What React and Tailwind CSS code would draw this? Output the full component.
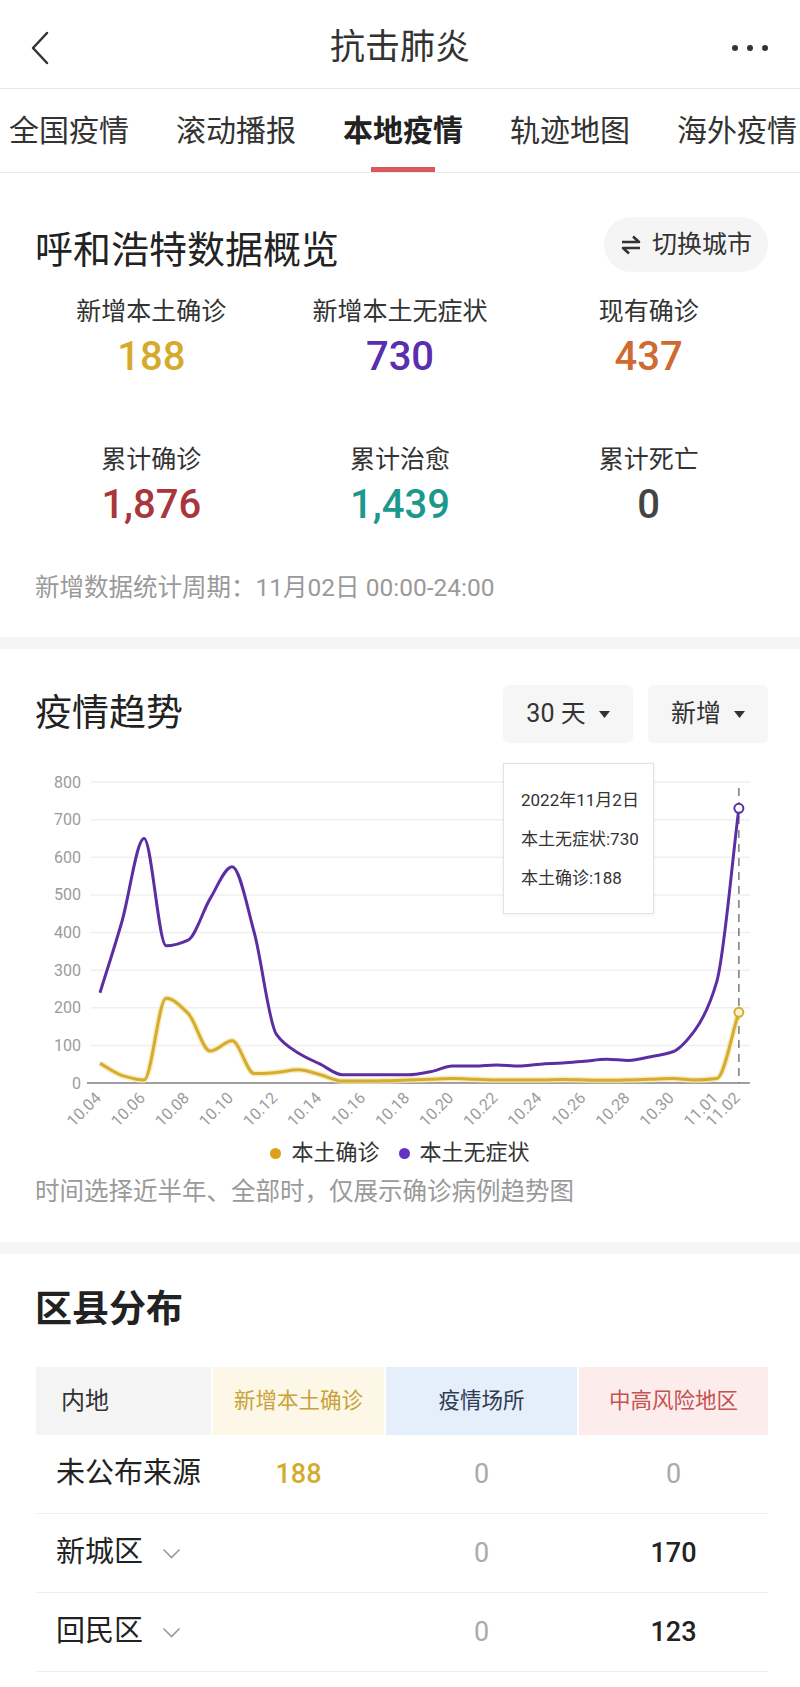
import React from 'react';

const TABS = ['全国疫情', '滚动播报', '本地疫情', '轨迹地图', '海外疫情'];

const STATS = [
    {label: '新增本土确诊', value: '188', color: 'text-[#d5ab2e]'},
    {label: '新增本土无症状', value: '730', color: 'text-[#5a2fae]'},
    {label: '现有确诊', value: '437', color: 'text-[#cf6a30]'},
    {label: '累计确诊', value: '1,876', color: 'text-[#a8363a]'},
    {label: '累计治愈', value: '1,439', color: 'text-[#1b998c]'},
    {label: '累计死亡', value: '0', color: 'text-[#444444]'},
];

// 10.04 - 11.02
const purple = [240, 430, 650, 365, 380, 490, 575, 400, 130, 80, 50, 22, 22, 22, 22, 30, 45, 45, 48, 45, 50, 53, 58, 63, 60, 70, 83, 140, 270, 730];
const yellow = [52, 20, 8, 225, 185, 85, 112, 25, 28, 35, 22, 5, 5, 6, 8, 10, 12, 10, 8, 8, 8, 9, 8, 7, 8, 10, 12, 8, 12, 188];

const X0 = 100;
const DX = 22.03;
const BASE = 328;
const K = 0.37625;
const px = (i) => X0 + i * DX;
const py = (v) => BASE - v * K;

const ticks = [
    ...Array.from({length: 14}, (_, n) => [n * 2, `10.${String(4 + n * 2).padStart(2, '0')}`]),
    [28, '11.01'],
    [29, '11.02'],
];

// monotone cubic, no overshoot below zero
function smoothPath(values) {
    const pts = values.map((v, i) => [px(i), py(v)]);
    const n = pts.length;
    const m = [];
    for (let i = 0; i < n - 1; i++) m[i] = (pts[i + 1][1] - pts[i][1]) / DX;
    const t = [m[0]];
    for (let i = 1; i < n - 1; i++) {
        t[i] = m[i - 1] * m[i] <= 0 ? 0 : (2 * m[i - 1] * m[i]) / (m[i - 1] + m[i]);
    }
    t[n - 1] = m[n - 2];
    const h = DX / 3;
    let d = `M${pts[0][0]},${pts[0][1]}`;
    for (let i = 0; i < n - 1; i++) {
        d += ` C${pts[i][0] + h},${pts[i][1] + h * t[i]} ${pts[i + 1][0] - h},${pts[i + 1][1] - h * t[i + 1]} ${pts[i + 1][0]},${pts[i + 1][1]}`;
    }
    return d;
}

const Caret = () => (
    <svg width="11" height="7" viewBox="0 0 11 7"><path d="M0 0h11L5.5 7z" fill="#333"/></svg>
);

const Chevron = () => (
    <svg width="19" height="11" viewBox="0 0 19 11" className="ml-[19px]">
        <path d="M1.5 1.5l8 8 8-8" fill="none" stroke="#9a9a9a" strokeWidth="1.6"/>
    </svg>
);

const TrendChart = () => {
    const lastX = px(29);
    return (
        <div className="relative mt-[12px] h-[380px]">
            <svg viewBox="0 0 800 380" className="block w-[800px] h-[380px]" fontFamily="Roboto, 'Noto Sans CJK SC', sans-serif">
                {[1, 2, 3, 4, 5, 6, 7, 8].map(k => (
                    <line key={k} x1={91} x2={750} y1={py(k * 100)} y2={py(k * 100)} stroke="#efefef" strokeWidth="1.5"/>
                ))}
                <line x1={87} x2={750} y1={BASE} y2={BASE} stroke="#a0a0a0" strokeWidth="2"/>
                {[0, 1, 2, 3, 4, 5, 6, 7, 8].map(k => (
                    <text key={k} x={81} y={py(k * 100)} textAnchor="end" dominantBaseline="central" fontSize="16" fill="#9b9b9b">{k * 100}</text>
                ))}
                {ticks.map(([i, label]) => (
                    <text key={label} x={px(i) + 2} y={344} textAnchor="end" fontSize="16" fill="#9b9b9b"
                          transform={`rotate(-45 ${px(i) + 2} 344)`}>{label}</text>
                ))}
                <line x1={lastX} x2={lastX} y1={33} y2={BASE} stroke="#7a7a7a" strokeWidth="1.5" strokeDasharray="8 6"/>
                <path d={smoothPath(yellow)} fill="none" stroke="#f4e6a6" strokeWidth="6" strokeOpacity="0.7"/>
                <path d={smoothPath(yellow)} fill="none" stroke="#d6ac30" strokeWidth="3"/>
                <path d={smoothPath(purple)} fill="none" stroke="#5b2fa3" strokeWidth="3"/>
                <circle cx={lastX} cy={py(730)} r="4.5" fill="#fff" stroke="#5b2fa3" strokeWidth="2"/>
                <circle cx={lastX} cy={py(188)} r="4.5" fill="#fbf1c8" stroke="#d6ac30" strokeWidth="2"/>
            </svg>
            <div className="absolute left-[503px] top-[8px] w-[151px] h-[151px] bg-white border border-[#e2e2e2] shadow-[0_1px_4px_rgba(0,0,0,0.06)] pl-[17px] pt-[17px] text-[17px] leading-[39px] text-[#333]">
                <div>2022年11月2日</div>
                <div>本土无症状:730</div>
                <div>本土确诊:188</div>
            </div>
        </div>
    );
};

const rows = [
    {name: '未公布来源', add: '188', place: '0', risk: '0', expand: false},
    {name: '新城区', add: '', place: '0', risk: '170', expand: true},
    {name: '回民区', add: '', place: '0', risk: '123', expand: true},
];

export default function App() {
    return (
        <div className="w-[800px] min-h-[1687px] bg-white text-[#333] font-['Roboto','Noto_Sans_CJK_SC',sans-serif]">
            {/* header */}
            <div className="h-[89px] pt-[8px] border-b border-[#e6e6e6] grid grid-cols-[1fr_auto_1fr] items-center px-[30px]">
                <svg width="20" height="34" viewBox="0 0 20 34">
                    <path d="M17 2L3 17l14 15" fill="none" stroke="#333" strokeWidth="2.5" strokeLinecap="round" strokeLinejoin="round"/>
                </svg>
                <div className="text-[35px] leading-[44px] text-[#333]">抗击肺炎</div>
                <div className="flex justify-end gap-[9px] pr-[2px]">
                    <span className="w-[6px] h-[6px] rounded-full bg-[#333]"/>
                    <span className="w-[6px] h-[6px] rounded-full bg-[#333]"/>
                    <span className="w-[6px] h-[6px] rounded-full bg-[#333]"/>
                </div>
            </div>

            {/* tabs */}
            <div className="h-[84px] border-b border-[#ebebeb] flex gap-[47px] pl-[9px] overflow-hidden whitespace-nowrap">
                {TABS.map((t, i) => (
                    <div key={t} className="relative h-full flex items-center shrink-0">
                        <span className={`text-[30px] leading-[40px] ${i === 2 ? 'font-bold text-[#222]' : 'text-[#333]'}`}>{t}</span>
                        {i === 2 && <span className="absolute bottom-0 left-1/2 -translate-x-1/2 w-[64px] h-[5px] bg-[#d85a5f]"/>}
                    </div>
                ))}
            </div>

            {/* overview */}
            <div className="pt-[44px] pb-[32px]">
                <div className="flex justify-between items-start pl-[35px] pr-[32px]">
                    <h2 className="text-[38px] leading-[44px] mt-[11px] text-[#222]">呼和浩特数据概览</h2>
                    <button className="h-[55px] px-[16px] rounded-[28px] bg-[#f5f5f5] flex items-center gap-[10px] text-[25px] text-[#333]">
                        <svg width="22" height="20" viewBox="0 0 22 20">
                            <path d="M2 7h17l-6-5.5" fill="none" stroke="#333" strokeWidth="2.6" strokeLinejoin="round"/>
                            <path d="M20 13H3l6 5.5" fill="none" stroke="#333" strokeWidth="2.6" strokeLinejoin="round"/>
                        </svg>
                        切换城市
                    </button>
                </div>
                <div className="grid grid-cols-3 gap-y-[62px] px-[27px] mt-[23px]">
                    {STATS.map(s => (
                        <div key={s.label} className="flex flex-col items-center">
                            <div className="text-[25px] leading-[34px] text-[#333]">{s.label}</div>
                            <div className={`text-[40px] leading-[48px] mt-[4px] font-medium ${s.color}`}>{s.value}</div>
                        </div>
                    ))}
                </div>
                <p className="px-[35px] mt-[42px] text-[24.5px] leading-[34px] text-[#9a9a9a]">新增数据统计周期：11月02日 00:00-24:00</p>
            </div>

            <div className="h-[12px] bg-[#f5f5f5]"/>

            {/* trend */}
            <div className="pt-[36px] pb-[33px]">
                <div className="flex justify-between items-center pl-[35px] pr-[32px]">
                    <h2 className="text-[37px] leading-[44px] text-[#222]">疫情趋势</h2>
                    <div className="flex gap-[15px]">
                        <div className="w-[130px] h-[58px] rounded-[6px] bg-[#f6f6f6] flex items-center justify-center gap-[13px] text-[25px]">
                            <span>30 天</span><Caret/>
                        </div>
                        <div className="w-[120px] h-[58px] rounded-[6px] bg-[#f6f6f6] flex items-center justify-center gap-[13px] text-[25px]">
                            <span>新增</span><Caret/>
                        </div>
                    </div>
                </div>
                <TrendChart/>
                <div className="flex justify-center items-center mt-[3px] text-[22px] leading-[30px] text-[#333]">
                    <span className="w-[11px] h-[11px] rounded-full bg-[#dba01e]"/>
                    <span className="ml-[10px]">本土确诊</span>
                    <span className="w-[11px] h-[11px] rounded-full bg-[#6531c4] ml-[19px]"/>
                    <span className="ml-[10px]">本土无症状</span>
                </div>
                <p className="px-[35px] mt-[7px] text-[24.5px] leading-[34px] text-[#9a9a9a]">时间选择近半年、全部时，仅展示确诊病例趋势图</p>
            </div>

            <div className="h-[12px] bg-[#f5f5f5]"/>

            {/* districts */}
            <div className="pt-[34px]">
                <h2 className="pl-[35px] text-[37px] leading-[44px] font-bold text-[#222]">区县分布</h2>
                <div className="mt-[35px] ml-[36px] mr-[32px]">
                    <div className="grid grid-cols-[175px_171px_191px_189px] gap-x-[2px] h-[68px]">
                        <div className="bg-[#f5f5f5] flex items-center pl-[25px] text-[24px] text-[#333]">内地</div>
                        <div className="bg-[#fcf7e6] flex items-center justify-center text-[21.5px] text-[#c9a23a]">新增本土确诊</div>
                        <div className="bg-[#e5eefb] flex items-center justify-center text-[21.5px] text-[#2f3b52]">疫情场所</div>
                        <div className="bg-[#fcecec] flex items-center justify-center text-[21.5px] text-[#c4524f]">中高风险地区</div>
                    </div>
                    {rows.map(r => (
                        <div key={r.name} className="grid grid-cols-[175px_171px_191px_189px] gap-x-[2px] h-[79px] border-b border-[#eeeeee]">
                            <div className="flex items-center pl-[20px] text-[29px] text-[#222] whitespace-nowrap">
                                {r.name}
                                {r.expand && <Chevron/>}
                            </div>
                            <div className="flex items-center justify-center text-[27px] font-medium text-[#d5ab2e]">{r.add}</div>
                            <div className="flex items-center justify-center text-[27px] text-[#aaaaaa]">{r.place}</div>
                            <div className={`flex items-center justify-center text-[27px] ${r.risk === '0' ? 'text-[#aaaaaa]' : 'font-medium text-[#222]'}`}>{r.risk}</div>
                        </div>
                    ))}
                </div>
            </div>
        </div>
    );
}
